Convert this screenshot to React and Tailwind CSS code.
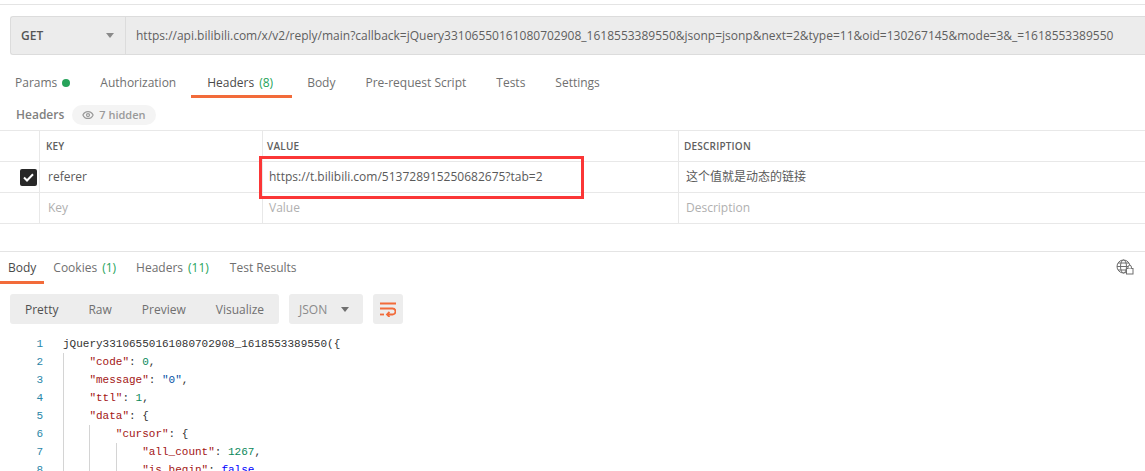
import { Eye } from "lucide-react";

const K = ({ c }) => <span className="text-[#a31515]">{c}</span>;
const N = ({ c }) => <span className="text-[#09885a]">{c}</span>;
const S = ({ c }) => <span className="text-[#0451a5]">{c}</span>;
const B = ({ c }) => <span className="text-[#0000ff]">{c}</span>;

const lines = [
  [0, <>jQuery33106550161080702908_1618553389550({"{"}</>],
  [1, <><K c={'"code"'} />: <N c="0" />,</>],
  [1, <><K c={'"message"'} />: <S c={'"0"'} />,</>],
  [1, <><K c={'"ttl"'} />: <N c="1" />,</>],
  [1, <><K c={'"data"'} />: {"{"}</>],
  [2, <><K c={'"cursor"'} />: {"{"}</>],
  [3, <><K c={'"all_count"'} />: <N c="1267" />,</>],
  [3, <><K c={'"is_begin"'} />: <B c="false" />,</>],
];

function Tab({ label, count, dot, active, className = "" }) {
  return (
    <div className={`flex items-center h-full border-b-[3px] ${active ? "border-[#f26b3a] text-[#4a4a4a]" : "border-transparent text-[#707070]"} ${className}`}>
      <span>{label}</span>
      {count && <span className="ml-[5px] text-[#26a35a]">{count}</span>}
      {dot && <span className="ml-[5px] w-2 h-2 rounded-full bg-[#26a35a]" />}
    </div>
  );
}

function CodeRow({ n, indent, children }) {
  return (
    <div className="flex h-[18px] leading-[18px] shrink-0">
      <div className="w-[43px] text-right text-[#2a86a8] shrink-0">{n}</div>
      <div className="w-[20px] shrink-0" />
      {Array.from({ length: indent }).map((_, i) => (
        <span key={i} className="w-[26.4px] shrink-0 border-l border-[#d4d4d4]" />
      ))}
      <div className="whitespace-pre text-[#333333]">{children}</div>
    </div>
  );
}

function TableRow({ className = "", check, a, b, c, color = "text-[#5a5a5a]", header }) {
  return (
    <div className={`flex shrink-0 border-b border-[#e8e8e8] ${className} ${color}`}>
      <div className="w-[40px] shrink-0 flex items-center pl-[20px] border-r border-[#e8e8e8]">
        {check && (
          <span className="w-[17px] h-[17px] rounded-[2px] bg-[#282828] flex items-center justify-center">
            <svg width="11" height="9" viewBox="0 0 11 9" fill="none"><path d="M1 4.5 L4 7.5 L10 1.2" stroke="#fff" strokeWidth="2" /></svg>
          </span>
        )}
      </div>
      <div className={`w-[223px] shrink-0 flex items-center border-r border-[#e8e8e8] ${header ? "pl-[6px]" : "pl-[8px]"}`}>{a}</div>
      <div className={`w-[416px] shrink-0 flex items-center border-r border-[#e8e8e8] ${header ? "pl-[4px]" : "pl-[6px]"}`}>{b}</div>
      <div className={`flex-1 flex items-center ${header ? "pl-[5px]" : "pl-[7px]"}`}>{c}</div>
    </div>
  );
}

export default function App() {
  return (
    <div className="w-[1145px] h-[471px] overflow-hidden bg-white flex flex-col text-[12px] text-[#505050]" style={{ fontFamily: '"Open Sans", "Noto Sans CJK SC", sans-serif' }}>
      <div className="h-[5px] shrink-0 border-b border-[#e4e4e4]" />

      <div className="h-[39px] mt-[11px] ml-[10px] shrink-0 flex bg-[#ececec] border border-[#dcdcdc] rounded-l-[3px] border-r-0">
        <div className="w-[115px] shrink-0 flex items-center justify-between pl-[10px] pr-[11px] border-r border-[#dcdcdc] text-[#555555]">
          <span className="font-semibold">GET</span>
          <span className="w-0 h-0 border-x-[4px] border-x-transparent border-t-[5px] border-t-[#8a8a8a]" />
        </div>
        <div className="flex-1 flex items-center pl-[10px] text-[#5f5f5f] whitespace-nowrap overflow-hidden">
          https://api.bilibili.com/x/v2/reply/main?callback=jQuery33106550161080702908_1618553389550&amp;jsonp=jsonp&amp;next=2&amp;type=11&amp;oid=130267145&amp;mode=3&amp;_=1618553389550
        </div>
      </div>

      <div className="h-[33px] mt-[10px] shrink-0 flex">
        <Tab label="Params" dot className="px-[15px] pt-[6px]" />
        <Tab label="Authorization" className="px-[15px] pt-[6px]" />
        <Tab label="Headers" count="(8)" active className="pl-[16px] pr-[19px] pt-[6px]" />
        <Tab label="Body" className="pl-[15px] pr-[15px] pt-[6px]" />
        <Tab label="Pre-request Script" className="pl-[15px] pr-[15px] pt-[6px]" />
        <Tab label="Tests" className="px-[15px] pt-[6px]" />
        <Tab label="Settings" className="px-[15px] pt-[6px]" />
      </div>

      <div className="h-[20px] mt-[7px] shrink-0 flex items-center pl-[16px]">
        <span className="font-semibold text-[#808080]">Headers</span>
        <span className="ml-[8px] h-[20px] px-[10px] rounded-full bg-[#f4f4f4] flex items-center gap-[5px] font-semibold text-[11px] text-[#9a9a9a]">
          <Eye size={12} strokeWidth={2.5} />
          7 hidden
        </span>
      </div>

      <div className="mt-[5px] shrink-0 flex flex-col border-t border-[#e8e8e8]">
        <TableRow header className="h-[31px] font-semibold text-[10px] tracking-[0.2px]" a="KEY" b="VALUE" c="DESCRIPTION" color="text-[#606060]" />
        <TableRow className="h-[31px]" check a="referer" b={
          <span className="relative flex items-center h-full w-full">
            <span>https://t.bilibili.com/513728915250682675?tab=2</span>
            <span className="absolute left-[-10px] top-[-6px] w-[325px] h-[43px] border-[3px] border-[#fb3636]" />
          </span>
        } c="这个值就是动态的链接" />
        <TableRow className="h-[31px]" a="Key" b="Value" c="Description" color="text-[#b0b0b0]" />
      </div>

      <div className="mt-[27px] shrink-0 border-t border-[#e4e4e4] h-[33px] flex items-stretch justify-between">
        <div className="flex">
          <Tab label="Body" active className="px-[8px] pt-[2px]" />
          <Tab label="Cookies" count="(1)" className="pl-[9px] pr-[10px] pt-[2px]" />
          <Tab label="Headers" count="(11)" className="pl-[10px] pr-[11px] pt-[2px]" />
          <Tab label="Test Results" className="pl-[10px] pr-[10px] pt-[2px]" />
        </div>
        <div className="flex items-center pr-[11px] pb-[2px]">
          <svg width="18" height="16" viewBox="0 0 18 16" fill="none" stroke="#6f6f6f" strokeWidth="1">
            <circle cx="7.5" cy="7.5" r="6.5" />
            <ellipse cx="7.5" cy="7.5" rx="3" ry="6.5" />
            <path d="M1 7.5 H14 M2 4 H13 M2 11 H10" />
            <rect x="10.5" y="9.5" width="6.5" height="5.5" fill="#fff" />
            <path d="M12 9.5 V8 a1.7 1.7 0 0 1 3.4 0 V9.5" fill="#fff" />
          </svg>
        </div>
      </div>

      <div className="mt-[10px] ml-[10px] h-[30px] shrink-0 flex gap-[10px]">
        <div className="w-[269px] bg-[#ededed] rounded-[3px] flex items-center pt-[1px] text-[#707070]">
          <span className="pl-[15px] text-[#505050]">Pretty</span>
          <span className="pl-[30px]">Raw</span>
          <span className="pl-[30px]">Preview</span>
          <span className="pl-[30px]">Visualize</span>
        </div>
        <div className="w-[74px] bg-[#ededed] rounded-[3px] flex items-center justify-between pt-[1px] pl-[10px] pr-[14px] text-[#8a8a8a]">
          <span>JSON</span>
          <span className="w-0 h-0 border-x-[4px] border-x-transparent border-t-[5px] border-t-[#707070]" />
        </div>
        <div className="w-[30px] bg-[#ededed] rounded-[3px] flex items-center justify-center">
          <svg width="16" height="15" viewBox="0 0 16 15" fill="none" stroke="#f26b3a" strokeWidth="1.8">
            <path d="M0 1.5 H16 M0 6.5 H12.5 a3 3 0 0 1 0 6 H7" />
            <path d="M9.5 10 L7 12.5 L9.5 15" />
            <path d="M0 12.5 H4" />
          </svg>
        </div>
      </div>

      <div className="mt-[11px] flex flex-col text-[11px]" style={{ fontFamily: '"Liberation Mono", monospace' }}>
        {lines.map(([indent, content], i) => (
          <CodeRow key={i} n={i + 1} indent={indent}>{content}</CodeRow>
        ))}
      </div>
    </div>
  );
}
